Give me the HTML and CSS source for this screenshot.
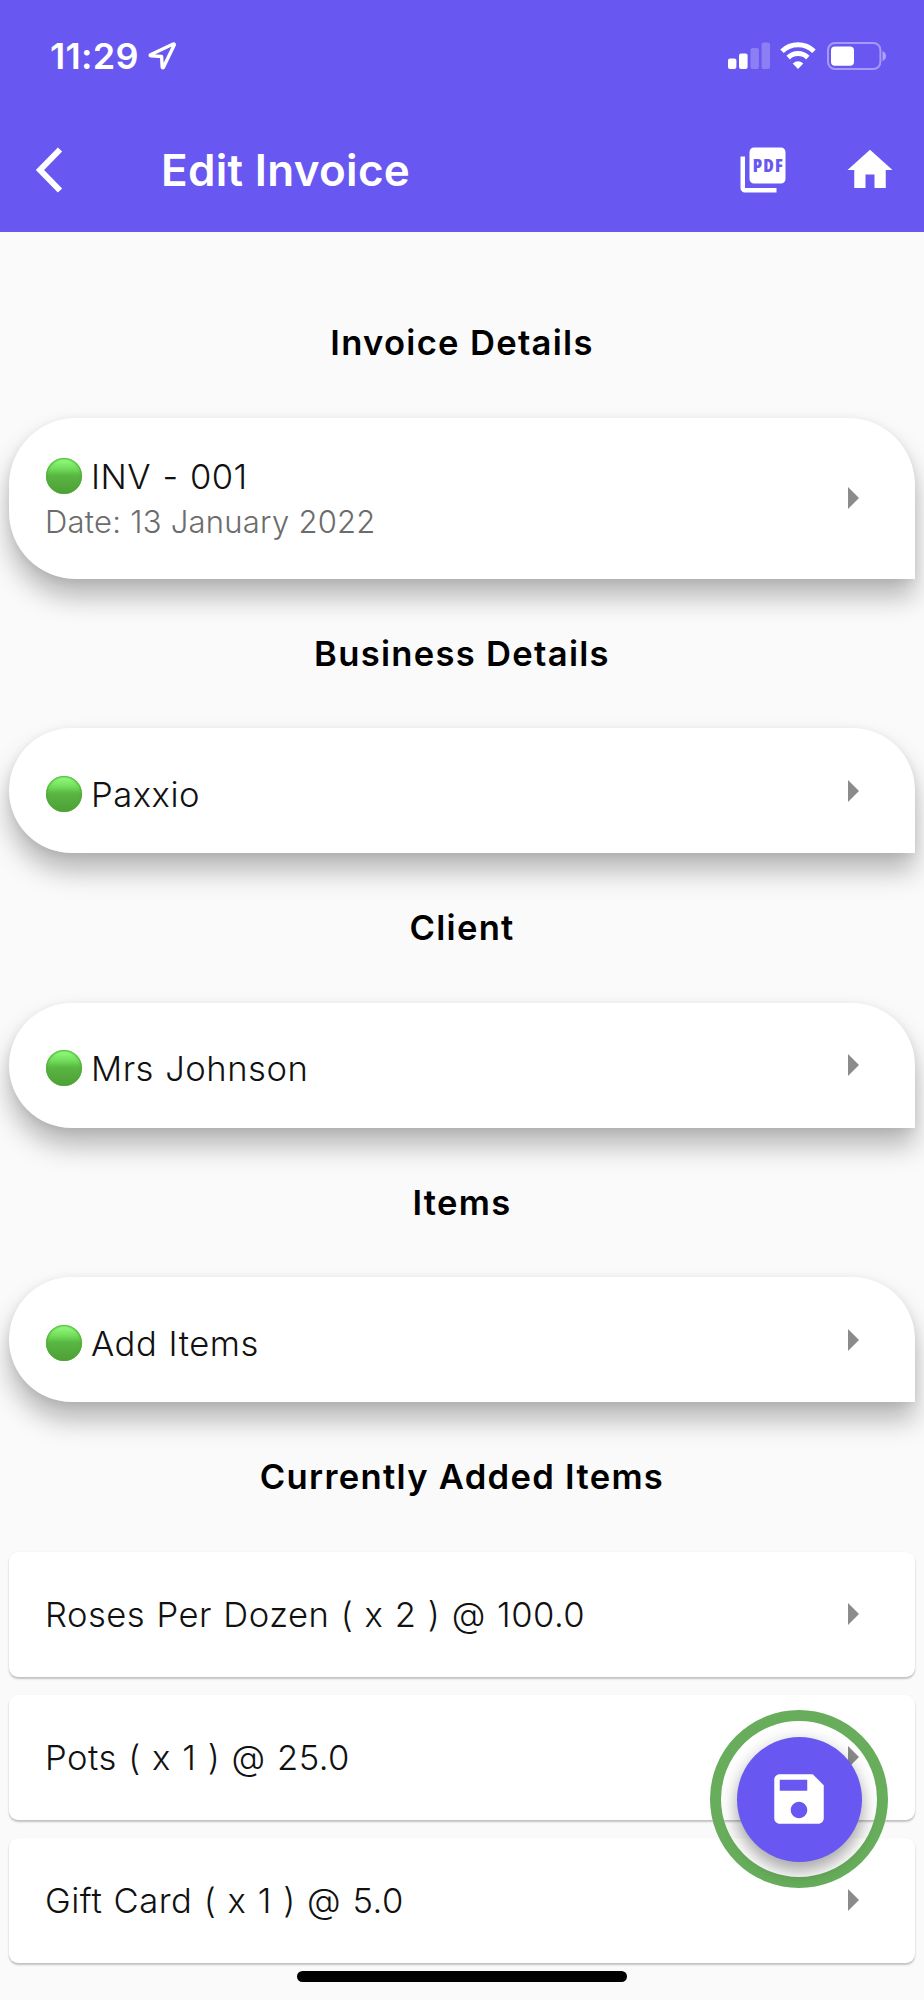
FILE: index.html
```html
<!DOCTYPE html>
<html lang="en">
<head>
    <meta charset="UTF-8">
    <title>Edit Invoice</title>
    <link rel="stylesheet" href="styles.css">
</head>
<body>
    <header class="header">
        <div class="status-bar">
            <span class="time">11:29</span>
            <svg class="location" width="30" height="30" viewBox="0 0 30 30">
                <path d="M26.2 3 L3.5 13.8 Q2.6 14.6 4 14.9 L14.6 15.5 L15.2 26 Q15.6 27.6 16.6 26 L27.2 4 Q27.4 2.6 26.2 3 Z" fill="none" stroke="#fff" stroke-width="3.4" stroke-linejoin="round"/>
            </svg>
            <div class="status-icons">
                <svg width="42" height="28" viewBox="0 0 42 28" fill="#fff">
                    <rect x="0" y="16.5" width="8.4" height="10.5" rx="2"/>
                    <rect x="11" y="11.5" width="8.6" height="15.5" rx="2"/>
                    <rect x="22.5" y="6" width="8.4" height="21" rx="2" opacity=".24"/>
                    <rect x="33.6" y="0.5" width="8.4" height="26.5" rx="2" opacity=".24"/>
                </svg>
                <svg class="wifi" width="36" height="28" viewBox="0 0 36 28">
                    <path d="M2 9.2 A23 23 0 0 1 34 9.2" fill="none" stroke="#fff" stroke-width="5"/>
                    <path d="M8.2 15.6 A14 14 0 0 1 27.8 15.6" fill="none" stroke="#fff" stroke-width="5"/>
                    <path d="M12.7 21.4 Q18 17.2 23.3 21.4 L18 27 Z" fill="#fff"/>
                </svg>
                <svg class="battery" width="60" height="28" viewBox="0 0 60 28">
                    <rect x="1" y="1" width="52.4" height="26" rx="7" fill="none" stroke="#fff" stroke-opacity=".4" stroke-width="2"/>
                    <rect x="4" y="4.5" width="23" height="19.2" rx="4" fill="#fff"/>
                    <path d="M55.5 9 Q59 10.5 59 14 Q59 17.5 55.5 19 Z" fill="#fff" opacity=".45"/>
                </svg>
            </div>
        </div>
        <nav class="nav">
            <svg class="back" width="30" height="46" viewBox="0 0 30 46">
                <path d="M27 2.5 L7 23 L27 43.5" fill="none" stroke="#fff" stroke-width="6"/>
            </svg>
            <h1>Edit Invoice</h1>
            <svg class="pdf" width="54" height="54" viewBox="0 0 24 24">
                <path fill="#fff" d="M20 2H8c-1.1 0-2 .9-2 2v12c0 1.1.9 2 2 2h12c1.1 0 2-.9 2-2V4c0-1.1-.9-2-2-2zM4 6H2v14c0 1.1.9 2 2 2h14v-2H4V6z"/>
                <text class="pdf-text" x="7.4" y="13" textLength="13.4">PDF</text>
            </svg>
            <svg class="home" width="54" height="54" viewBox="0 0 24 24">
                <path fill="#fff" d="M10 20v-6h4v6h5v-8h3L12 3 2 12h3v8z"/>
            </svg>
        </nav>
    </header>

    <main class="content">
        <h2>Invoice Details</h2>
        <div class="card tall">
            <div class="card-text">
                <p class="title"><span class="dot"></span>INV - 001</p>
                <p class="subtitle">Date: 13 January 2022</p>
            </div>
            <span class="arrow"></span>
        </div>

        <h2>Business Details</h2>
        <div class="card">
            <p class="title"><span class="dot"></span>Paxxio</p>
            <span class="arrow"></span>
        </div>

        <h2>Client</h2>
        <div class="card">
            <p class="title"><span class="dot"></span>Mrs Johnson</p>
            <span class="arrow"></span>
        </div>

        <h2>Items</h2>
        <div class="card">
            <p class="title"><span class="dot"></span>Add Items</p>
            <span class="arrow"></span>
        </div>

        <h2>Currently Added Items</h2>
        <div class="items">
            <div class="item">
                <p class="title">Roses Per Dozen ( x 2 ) @ 100.0</p>
                <span class="arrow"></span>
            </div>
            <div class="item">
                <p class="title">Pots ( x 1 ) @ 25.0</p>
                <span class="arrow"></span>
            </div>
            <div class="item">
                <p class="title">Gift Card ( x 1 ) @ 5.0</p>
                <span class="arrow"></span>
            </div>
        </div>
    </main>

    <div class="save-ring">
        <button class="save" aria-label="Save">
            <svg width="66" height="66" viewBox="0 0 24 24">
                <path fill="#fff" d="M17 3H5c-1.11 0-2 .9-2 2v14c0 1.1.89 2 2 2h14c1.1 0 2-.9 2-2V7l-4-4zm-5 16c-1.66 0-3-1.34-3-3s1.34-3 3-3 3 1.34 3 3-1.34 3-3 3zm3-10H5V5h10v4z"/>
            </svg>
        </button>
    </div>
    <div class="home-indicator"></div>
</body>
</html>
```
FILE: styles.css
```css
* {
    box-sizing: border-box;
}

body {
    margin: 0;
    position: relative;
    width: 924px;
    height: 2000px;
    overflow: hidden;
    background-color: #fafafa;
    font-family: Inter, "Liberation Sans", sans-serif;
    color: #000;
}

h1, h2, p {
    margin: 0;
}

svg {
    display: block;
    flex-shrink: 0;
}

/* header */
.header {
    height: 232px;
    background-color: #6857f0;
    color: #fff;
}

.status-bar {
    display: flex;
    align-items: center;
    height: 112px;
    padding: 0 37px 0 50px;
}

.time {
    width: 97px;
    font-size: 36px;
    font-weight: 600;
    letter-spacing: 0.3px;
    white-space: nowrap;
}

.status-icons {
    display: flex;
    margin-left: auto;
}

.wifi {
    margin-left: 10px;
}

.battery {
    margin-left: 11px;
}

.nav {
    display: flex;
    align-items: center;
    height: 116px;
    padding: 0 27px 0 33px;
}

.nav h1 {
    margin-left: 98px;
    font-size: 44px;
    font-weight: 600;
    line-height: 54px;
    letter-spacing: 0.3px;
}

.pdf {
    margin-left: auto;
}

.pdf-text {
    font-family: "Open Sans", Roboto, sans-serif;
    font-size: 8px;
    font-stretch: condensed;
    font-weight: 800;
    fill: #6857f0;
}

.home {
    margin-left: 53px;
}

/* content */
.content {
    padding: 36px 9px 0;
}

h2 {
    height: 149.5px;
    line-height: 149.5px;
    text-align: center;
    font-size: 34.6px;
    font-weight: 600;
    letter-spacing: 1.3px;
}

.card,
.item {
    display: flex;
    align-items: center;
    justify-content: space-between;
    height: 125px;
    padding: 0 56px 0 36px;
    background-color: #fff;
}

.card {
    border-radius: 67px 67px 0 67px;
    box-shadow: 0 18px 27px rgba(0, 0, 0, 0.27), 0 2px 10px rgba(0, 0, 0, 0.08);
}

.card.tall {
    height: 161px;
}

.card > .title {
    padding-top: 6px;
}

.card-text {
    padding-top: 1px;
}

.title {
    display: flex;
    align-items: center;
    font-size: 34.6px;
    font-weight: 300;
    line-height: 46px;
    letter-spacing: 0.5px;
    word-spacing: 1.1px;
    color: #111;
    white-space: pre;
}

.subtitle {
    font-size: 31px;
    font-weight: 300;
    line-height: 45px;
    letter-spacing: 0.25px;
    color: #6c6c6c;
}

.dot {
    width: 36px;
    height: 36px;
    margin-left: 1px;
    margin-right: 9px;
    border-radius: 50%;
    background: linear-gradient(#8ffb7c 5%, #72dc5b 30%, #59b741 48%, #4f9d38);
    box-shadow: inset 0 0 2px 1px #4cab34;
}

.arrow {
    border-style: solid;
    border-width: 11px 0 11px 11px;
    border-color: transparent transparent transparent #8b8b8b;
}

.items {
    display: flex;
    flex-direction: column;
    gap: 18px;
}

.item {
    border-radius: 9px;
    box-shadow: 0 2px 2px rgba(0, 0, 0, 0.22), 0 0 2px rgba(0, 0, 0, 0.06);
}

.item .title {
    margin-top: -1px;
}

/* floating save button */
.save-ring {
    position: absolute;
    left: 710px;
    top: 1710px;
    display: flex;
    align-items: center;
    justify-content: center;
    width: 178px;
    height: 178px;
    border: 11px solid #67ad5b;
    border-radius: 50%;
}

.save {
    display: flex;
    align-items: center;
    justify-content: center;
    width: 125px;
    height: 125px;
    padding: 0;
    border: none;
    border-radius: 50%;
    background-color: #6857f0;
    box-shadow: 0 10px 16px rgba(0, 0, 0, 0.28), 0 2px 20px rgba(0, 0, 0, 0.12);
}

.home-indicator {
    position: absolute;
    left: 297px;
    top: 1971px;
    width: 330px;
    height: 11px;
    border-radius: 6px;
    background-color: #000;
}
```
